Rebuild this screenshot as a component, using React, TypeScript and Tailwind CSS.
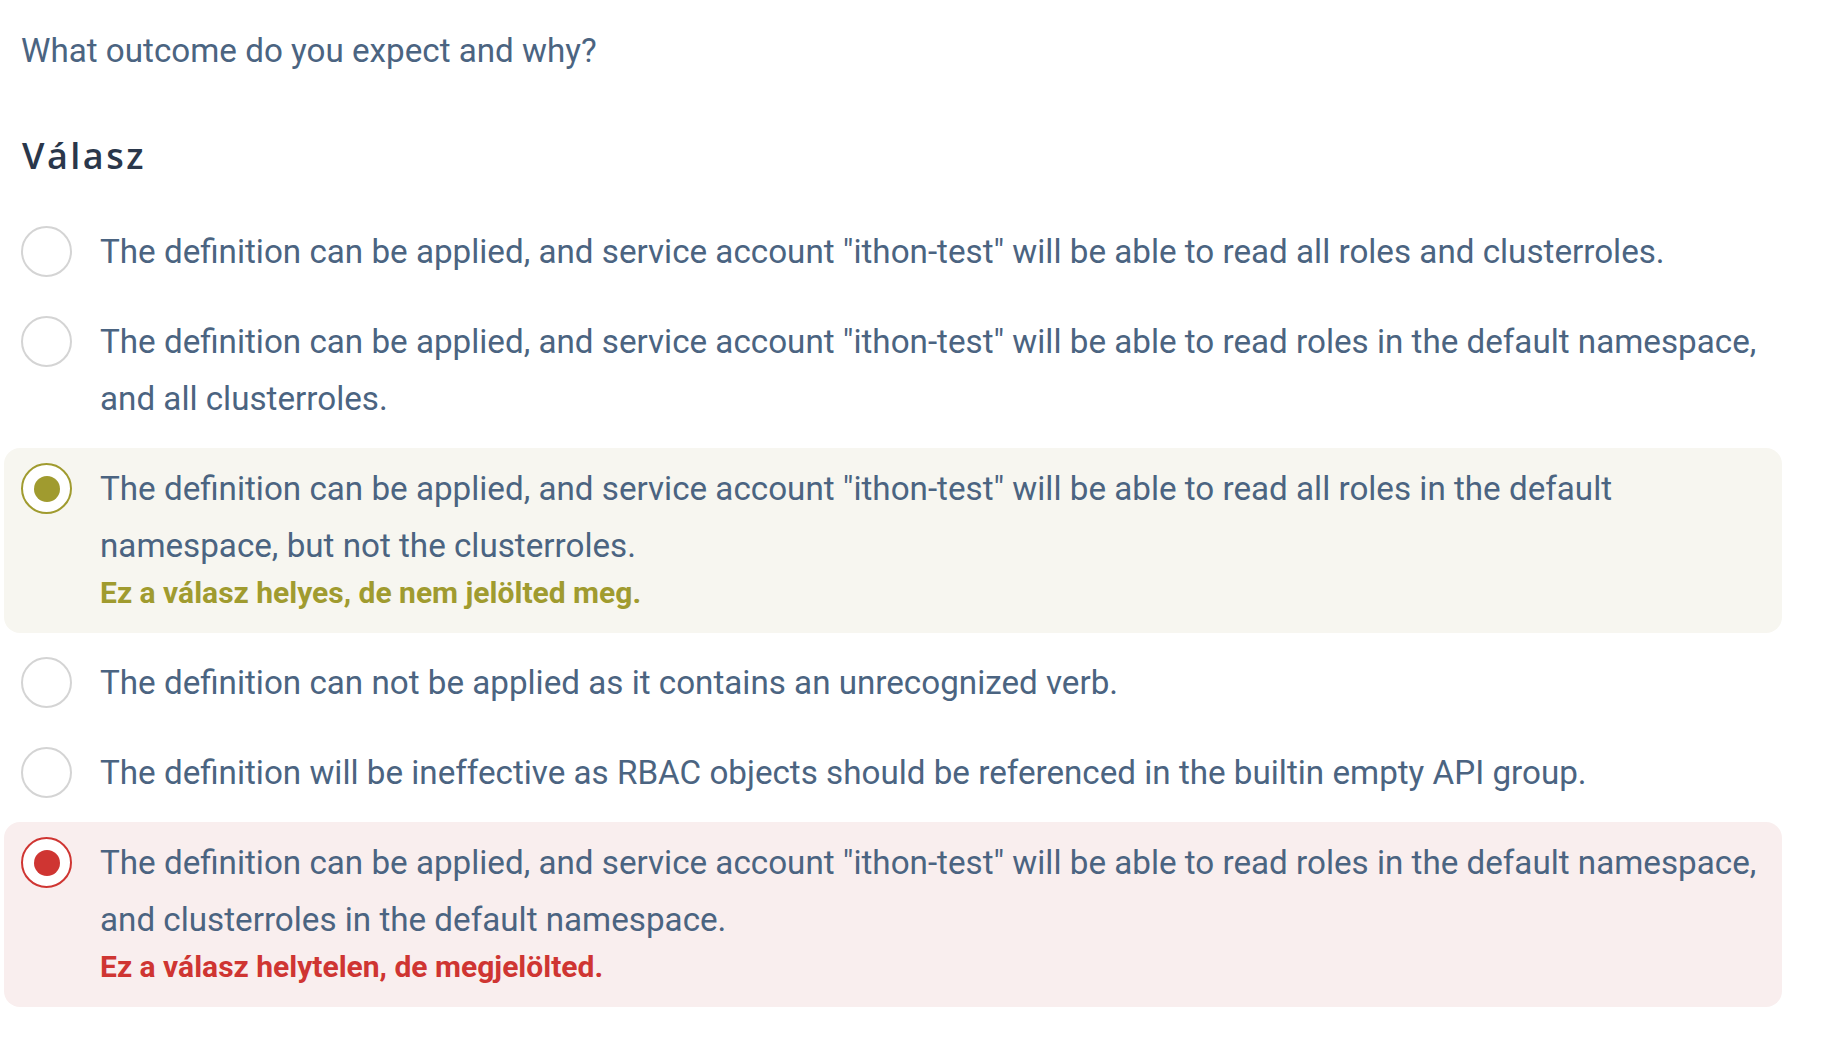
type Answer = {
  text: string
  state?: 'correct-missed' | 'wrong-marked'
}

const answers: Answer[] = [
  {
    text: 'The definition can be applied, and service account "ithon-test" will be able to read all roles and clusterroles.',
  },
  {
    text: 'The definition can be applied, and service account "ithon-test" will be able to read roles in the default namespace, and all clusterroles.',
  },
  {
    text: 'The definition can be applied, and service account "ithon-test" will be able to read all roles in the default namespace, but not the clusterroles.',
    state: 'correct-missed',
  },
  { text: 'The definition can not be applied as it contains an unrecognized verb.' },
  { text: 'The definition will be ineffective as RBAC objects should be referenced in the builtin empty API group.' },
  {
    text: 'The definition can be applied, and service account "ithon-test" will be able to read roles in the default namespace, and clusterroles in the default namespace.',
    state: 'wrong-marked',
  },
]

function Radio({ state }: { state?: Answer['state'] }) {
  if (state === 'correct-missed') {
    return (
      <div className="w-[51px] h-[51px] mt-[3px] shrink-0 rounded-full border-2 border-[#a09b2f] bg-white flex items-center justify-center">
        <div className="w-[26px] h-[26px] rounded-full bg-[#a09b2f]" />
      </div>
    )
  }
  if (state === 'wrong-marked') {
    return (
      <div className="w-[51px] h-[51px] mt-[3px] shrink-0 rounded-full border-2 border-[#cf3532] bg-white flex items-center justify-center">
        <div className="w-[26px] h-[26px] rounded-full bg-[#cf3532]" />
      </div>
    )
  }
  return <div className="w-[51px] h-[51px] mt-[3px] shrink-0 rounded-full border-2 border-[#d4d4d4] bg-white" />
}

function AnswerRow({ answer }: { answer: Answer }) {
  const bg =
    answer.state === 'correct-missed'
      ? 'bg-[#f7f6f0] pb-[21px]'
      : answer.state === 'wrong-marked'
        ? 'bg-[#f9eeee] pb-[21px]'
        : 'pb-[12px]'

  return (
    <div className={`flex items-start gap-[28px] pl-[17px] pr-[12px] pt-[12px] rounded-[16px] ${bg}`}>
      <Radio state={answer.state} />
      <div className="flex-1">
        <p className="text-[33.2px] leading-[57px] text-[#4b6481]">{answer.text}</p>
        {answer.state === 'correct-missed' && (
          <p className="text-[30px] leading-[38px] font-bold text-[#a09b2f]">Ez a válasz helyes, de nem jelölted meg.</p>
        )}
        {answer.state === 'wrong-marked' && (
          <p className="text-[30px] leading-[38px] font-bold text-[#cf3532]">Ez a válasz helytelen, de megjelölted.</p>
        )}
      </div>
    </div>
  )
}

export default function App() {
  return (
    <div className="min-h-screen bg-white font-['Roboto',sans-serif] pl-[4px]">
      <div className="w-[1778px]">
        {/* Question */}
        <p className="pt-[22px] pl-[17px] text-[33.2px] leading-[57px] text-[#4b6481]">What outcome do you expect and why?</p>

        {/* Heading */}
        <h2 className="mt-[55px] pl-[18px] text-[36px] leading-[44px] font-semibold tracking-[2.5px] text-[#2a374b] font-['Open_Sans',sans-serif]">
          Válasz
        </h2>

        {/* Answers */}
        <div className="mt-[33px] flex flex-col gap-[9px]">
          {answers.map((a, i) => (
            <AnswerRow key={i} answer={a} />
          ))}
        </div>
      </div>
    </div>
  )
}
